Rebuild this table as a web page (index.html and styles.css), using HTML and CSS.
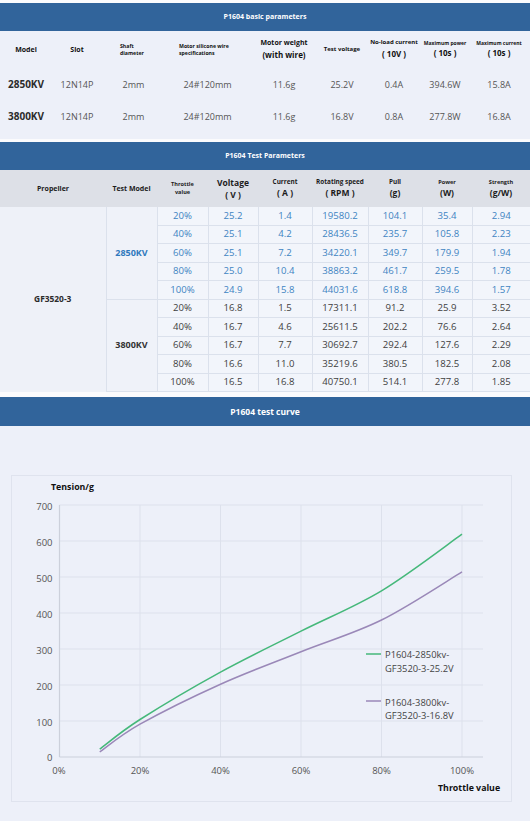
FILE: index.html
```html
<!DOCTYPE html>
<html lang="en">

<head>
    <meta charset="UTF-8">
    <meta name="viewport" content="width=device-width, initial-scale=1.0">
    <title>P1604 parameters</title>
    <link rel="stylesheet" href="styles.css">
</head>

<body>
    <section class="block">
        <h2 class="band">P1604 basic parameters</h2>
        <table class="basic">
            <colgroup>
                <col class="w52"><col class="w50"><col class="w63"><col class="w85"><col class="w68">
                <col class="w48"><col class="w56"><col class="w46"><col class="w62">
            </colgroup>
            <tr class="head">
                <th class="h7">Model</th>
                <th class="h7">Slot</th>
                <th class="h5 left">Shaft<br>diameter</th>
                <th class="h5 left">Motor silicone wire<br>specifications</th>
                <th class="h7">Motor weight<br><span class="big">(with wire)</span></th>
                <th class="h6">Test voltage</th>
                <th class="h6">No-load current<br><span class="big">( 10V )</span></th>
                <th class="h4">Maximum power<br><span class="big">( 10s )</span></th>
                <th class="h4">Maximum current<br><span class="big">( 10s )</span></th>
            </tr>
            <tr class="r1">
                <td class="model">2850KV</td>
                <td>12N14P</td>
                <td>2mm</td>
                <td>24#120mm</td>
                <td>11.6g</td>
                <td>25.2V</td>
                <td>0.4A</td>
                <td>394.6W</td>
                <td>15.8A</td>
            </tr>
            <tr class="r2">
                <td class="model">3800KV</td>
                <td>12N14P</td>
                <td>2mm</td>
                <td>24#120mm</td>
                <td>11.6g</td>
                <td>16.8V</td>
                <td>0.8A</td>
                <td>277.8W</td>
                <td>16.8A</td>
            </tr>
        </table>
    </section>

    <section class="block">
        <h2 class="band">P1604 Test Parameters</h2>
        <table class="test">
            <colgroup>
                <col class="w106"><col class="w51"><col class="w51"><col class="w50"><col class="w54">
                <col class="w56"><col class="w54"><col class="w50"><col class="w58">
            </colgroup>
            <tr class="head">
                <th class="s7">Propeller</th>
                <th class="s7">Test Model</th>
                <th class="s5">Throttle<br>value</th>
                <th class="s8">Voltage<br><span class="unit">( V )</span></th>
                <th class="s6">Current<br><span class="unit">( A )</span></th>
                <th class="s6">Rotating speed<br><span class="unit">( RPM )</span></th>
                <th class="s6">Pull<br><span class="unit">(g)</span></th>
                <th class="s5">Power<br><span class="unit">(W)</span></th>
                <th class="s5">Strength<br><span class="unit">(g/W)</span></th>
            </tr>
            <tr class="kv1">
                <td class="prop" rowspan="10">GF3520-3</td>
                <td class="kvname kv1name" rowspan="5">2850KV</td>
                <td>20%</td><td>25.2</td><td>1.4</td><td>19580.2</td><td>104.1</td><td>35.4</td><td>2.94</td>
            </tr>
            <tr class="kv1"><td>40%</td><td>25.1</td><td>4.2</td><td>28436.5</td><td>235.7</td><td>105.8</td><td>2.23</td></tr>
            <tr class="kv1"><td>60%</td><td>25.1</td><td>7.2</td><td>34220.1</td><td>349.7</td><td>179.9</td><td>1.94</td></tr>
            <tr class="kv1"><td>80%</td><td>25.0</td><td>10.4</td><td>38863.2</td><td>461.7</td><td>259.5</td><td>1.78</td></tr>
            <tr class="kv1"><td>100%</td><td>24.9</td><td>15.8</td><td>44031.6</td><td>618.8</td><td>394.6</td><td>1.57</td></tr>
            <tr class="kv2">
                <td class="kvname" rowspan="5">3800KV</td>
                <td>20%</td><td>16.8</td><td>1.5</td><td>17311.1</td><td>91.2</td><td>25.9</td><td>3.52</td>
            </tr>
            <tr class="kv2"><td>40%</td><td>16.7</td><td>4.6</td><td>25611.5</td><td>202.2</td><td>76.6</td><td>2.64</td></tr>
            <tr class="kv2"><td>60%</td><td>16.7</td><td>7.7</td><td>30692.7</td><td>292.4</td><td>127.6</td><td>2.29</td></tr>
            <tr class="kv2"><td>80%</td><td>16.6</td><td>11.0</td><td>35219.6</td><td>380.5</td><td>182.5</td><td>2.08</td></tr>
            <tr class="kv2"><td>100%</td><td>16.5</td><td>16.8</td><td>40750.1</td><td>514.1</td><td>277.8</td><td>1.85</td></tr>
        </table>
    </section>

    <section class="block curve">
        <h2 class="band band-curve">P1604 test curve</h2>
        <div class="chart-area">
            <div class="chart-box">
                <svg class="chart" width="499" height="325" viewBox="12 476 499 325">
                    <g class="grid">
                        <line x1="59.5" y1="505" x2="483" y2="505"/>
                        <line x1="59.5" y1="541" x2="483" y2="541"/>
                        <line x1="59.5" y1="577" x2="483" y2="577"/>
                        <line x1="59.5" y1="613" x2="483" y2="613"/>
                        <line x1="59.5" y1="649" x2="483" y2="649"/>
                        <line x1="59.5" y1="685" x2="483" y2="685"/>
                        <line x1="59.5" y1="721" x2="483" y2="721"/>
                        <line x1="140" y1="505" x2="140" y2="757"/>
                        <line x1="220.5" y1="505" x2="220.5" y2="757"/>
                        <line x1="301" y1="505" x2="301" y2="757"/>
                        <line x1="381.5" y1="505" x2="381.5" y2="757"/>
                        <line x1="462" y1="505" x2="462" y2="757"/>
                    </g>
                    <g class="axis">
                        <line x1="59.5" y1="505" x2="59.5" y2="757"/>
                        <line x1="59.5" y1="757" x2="483" y2="757"/>
                    </g>
                    <g class="ylab">
                        <text x="52.5" y="509.5">700</text>
                        <text x="52.5" y="545.5">600</text>
                        <text x="52.5" y="581.5">500</text>
                        <text x="52.5" y="617.5">400</text>
                        <text x="52.5" y="653.5">300</text>
                        <text x="52.5" y="689.5">200</text>
                        <text x="52.5" y="725.5">100</text>
                        <text x="52.5" y="761">0</text>
                    </g>
                    <g class="xlab">
                        <text x="59" y="774">0%</text>
                        <text x="140" y="774">20%</text>
                        <text x="220.5" y="774">40%</text>
                        <text x="301" y="774">60%</text>
                        <text x="381.5" y="774">80%</text>
                        <text x="462" y="774">100%</text>
                    </g>
                    <text class="title" x="51" y="489.5">Tension/g</text>
                    <text class="title" x="438" y="790.5">Throttle value</text>

                    <path class="line green" d="M99.75 749.1 C106.46 744.17 119.88 732.33 140 719.5 C160.13 706.67 193.67 686.83 220.5 672.1 C247.33 657.37 274.17 644.65 301 631.1 C327.83 617.55 354.67 606.95 381.5 590.8 C408.33 574.65 448.58 543.63 462 534.2"/>
                    <path class="line purple" d="M99.75 752 C106.46 747.37 119.88 735.5 140 724.2 C160.13 712.9 193.67 696.28 220.5 684.2 C247.33 672.12 274.17 662.4 301 651.7 C327.83 641 354.67 633.3 381.5 620 C408.33 606.7 448.58 579.92 462 571.9"/>

                    <line class="line green" x1="366" y1="654" x2="381" y2="654"/>
                    <text class="legend" x="385" y="658.3">P1604-2850kv-</text>
                    <text class="legend" x="385" y="671.7">GF3520-3-25.2V</text>
                    <line class="line purple" x1="366" y1="701" x2="381" y2="701"/>
                    <text class="legend" x="385" y="705.7">P1604-3800kv-</text>
                    <text class="legend" x="385" y="718.8">GF3520-3-16.8V</text>
                </svg>
            </div>
        </div>
    </section>
</body>

</html>
```

FILE: styles.css
```css
body {
    margin: 0;
    padding: 0;
    width: 530px;
    background-color: #edf0f9;
    font-family: "Open Sans", "Noto Sans", sans-serif;
    color: #444;
}

.band {
    margin: 0;
    height: 28px;
    line-height: 28px;
    border-top: 3px solid #fbfbfd;
    background-color: #31649b;
    color: #fff;
    font-size: 7px;
    font-weight: bold;
    text-align: center;
}

.band-curve {
    height: 29px;
    line-height: 29px;
    border-top-width: 5px;
    font-size: 8.5px;
}

table {
    border-collapse: collapse;
    table-layout: fixed;
    width: 530px;
}

th, td {
    padding: 0;
    text-align: center;
}

/* column widths */
.w52 { width: 52px; }
.w50 { width: 50px; }
.w63 { width: 63px; }
.w85 { width: 85px; }
.w68 { width: 68px; }
.w48 { width: 48px; }
.w56 { width: 56px; }
.w46 { width: 46px; }
.w62 { width: 62px; }
.w106 { width: 106px; }
.w51 { width: 51px; }
.w54 { width: 54px; }
.w58 { width: 58px; }

/* basic parameters */
.basic {
    margin-bottom: 6px;
}

.basic .head {
    height: 38px;
}

.basic th {
    color: #111;
    line-height: 1.3;
}

.basic .left {
    text-align: left;
    padding-left: 18px;
}

.basic .left + .left {
    padding-left: 14px;
}

.h7 { font-size: 7px; }
.h6 { font-size: 6px; }
.h5 { font-size: 5.2px; }
.h4 { font-size: 5px; }

.basic .big {
    font-size: 8px;
    line-height: 14px;
}

.basic .r1 { height: 30px; }
.basic .r2 { height: 34px; }

.basic td {
    font-size: 9px;
    color: #555;
}

.basic .model {
    font-size: 10px;
    font-weight: bold;
    color: #2b2b2b;
}

/* test parameters */
.test .head {
    height: 37px;
    background-color: #dde0e7;
}

.test th {
    color: #1c1c1c;
    line-height: 1.35;
}

.s8 { font-size: 8.5px; }
.s7 { font-size: 7px; }
.s6 { font-size: 6.4px; }
.s5 { font-size: 5.6px; }

.test .unit {
    font-size: 8.5px;
}

.test td {
    height: 17.5px;
    line-height: 12px;
    font-size: 9.6px;
    border: 1px solid #dbe1ec;
    background-color: #f2f5fb;
}

.test tr:nth-child(2) td {
    border-top: none;
}

.test td:last-child {
    border-right: none;
}

.kv1 td {
    color: #3e84c2;
}

.kv2 td {
    color: #3e3e3e;
}

.test .prop {
    border-left: none;
    border-bottom: none;
    background-color: #eef1f8;
    color: #2b2b2b;
    font-weight: bold;
    font-size: 8.4px;
}

.test .kvname {
    font-weight: bold;
    font-size: 9px;
    color: #333;
    background-color: #eff2f9;
}

.test .kv1name {
    color: #2f79bd;
}

/* curve */
.chart-area {
    padding: 49px 18px 19px 11px;
}

.chart-box {
    width: 499px;
    height: 325px;
    border: 1px solid #dfe3ee;
}

.chart {
    display: block;
}

.grid line {
    stroke: #dde1ec;
    stroke-width: 1;
}

.axis line {
    stroke: #ccd0db;
    stroke-width: 1.2;
}

.ylab text {
    font-family: "Open Sans", sans-serif;
    font-size: 9.5px;
    fill: #555;
    text-anchor: end;
}

.xlab text {
    font-family: "Open Sans", sans-serif;
    font-size: 9.5px;
    fill: #555;
    text-anchor: middle;
}

.title {
    font-family: "Open Sans", sans-serif;
    font-size: 8.8px;
    font-weight: bold;
    fill: #111;
}

.legend {
    font-family: "Open Sans", sans-serif;
    font-size: 9.4px;
    fill: #444;
}

.line {
    fill: none;
    stroke-width: 1.5;
}

.green {
    stroke: #45b87a;
}

.purple {
    stroke: #9a88b8;
}
```
